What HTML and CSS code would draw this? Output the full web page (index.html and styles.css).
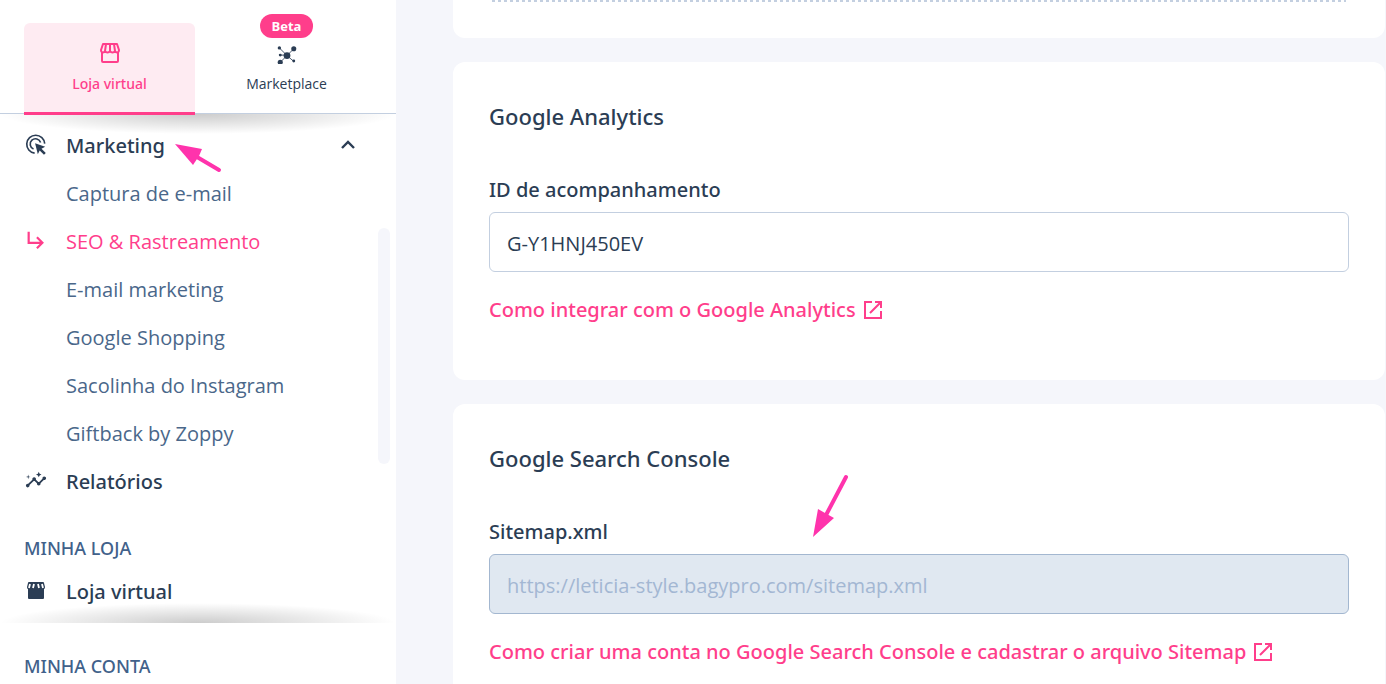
FILE: index.html
```html
<!DOCTYPE html>
<html lang="pt-BR">
<head>
    <meta charset="UTF-8">
    <meta name="viewport" content="width=device-width, initial-scale=1.0">
    <title>SEO &amp; Rastreamento</title>
    <link rel="stylesheet" href="styles.css">
</head>
<body>
    <aside class="sidebar">
        <div class="tabs">
            <button type="button" class="tab active">
                <svg class="tab-icon" viewBox="0 0 22 22" fill="none" stroke="currentColor" stroke-width="2" stroke-linejoin="round">
                    <path d="M3 10v9q0 1 1 1h14q1 0 1-1v-9"/>
                    <path d="M4 2h14l2 6c0 3-3 3-4 1c-1 2-4 2-5 0c-1 2-4 2-5 0c-1 2-4 2-4-1zM7 2L6 9M11 2v7M15 2l1 7"/>
                </svg>
                <span>Loja virtual</span>
            </button>
            <button type="button" class="tab">
                <span class="badge">Beta</span>
                <svg class="tab-icon" viewBox="-1 -4 26 26" fill="currentColor" stroke="currentColor">
                    <path d="M3 3l9 9M20 4L4 20M12 12l8 7M4 11.500h8" fill="none" stroke-width="1"/>
                    <g stroke="none">
                        <circle cx="12" cy="12" r="4"/>
                        <circle cx="20" cy="4" r="3"/>
                        <circle cx="4" cy="20" r="3"/>
                        <circle cx="3" cy="3" r="2"/>
                        <circle cx="20" cy="18.500" r="1.700"/>
                        <circle cx="4" cy="11.500" r="1.700"/>
                    </g>
                </svg>
                <span>Marketplace</span>
            </button>
        </div>
        <nav class="menu">
            <button type="button" class="menu-item" aria-expanded="true">
                <svg class="icon" viewBox="0 0 24 24" fill="none" stroke="currentColor" stroke-width="1.800">
                    <path d="M10.500 20.900A9.800 9.800 0 1 1 21.500 10.500M9.300 16.400A5.800 5.800 0 1 1 17 9.300"/>
                    <path d="M11 10l11 4-4 2 4.700 4.600-2 2L16 18l-2 4z" fill="currentColor" stroke="none"/>
                </svg>
                <span>Marketing</span>
                <svg class="chevron" viewBox="0 0 16 16" fill="none" stroke="currentColor" stroke-width="2.400">
                    <path d="M2 11l6-6 6 6"/>
                </svg>
            </button>
            <a href="#" class="menu-item sub">Captura de e-mail</a>
            <a href="#" class="menu-item sub current">
                <svg class="icon" viewBox="0 0 24 24" fill="none" stroke="currentColor" stroke-width="2.400">
                    <path d="M4 2v12h15M13 8l6 6-6 6"/>
                </svg>
                <span>SEO &amp; Rastreamento</span>
            </a>
            <a href="#" class="menu-item sub">E-mail marketing</a>
            <a href="#" class="menu-item sub">Google Shopping</a>
            <a href="#" class="menu-item sub">Sacolinha do Instagram</a>
            <a href="#" class="menu-item sub">Giftback by Zoppy</a>
            <a href="#" class="menu-item">
                <svg class="icon" viewBox="0 1 24 24" fill="currentColor">
                    <path d="M21 8c-1.450 0-2.260 1.440-1.930 2.510l-3.550 3.560c-.3-.09-.74-.09-1.040 0l-2.550-2.550C12.270 10.450 11.460 9 10 9c-1.450 0-2.270 1.440-1.930 2.520l-4.560 4.550C2.440 15.740 1 16.550 1 18c0 1.100.9 2 2 2 1.450 0 2.260-1.440 1.930-2.510l4.550-4.560c.3.09.74.09 1.040 0l2.550 2.550C12.730 16.550 13.540 18 15 18c1.450 0 2.270-1.440 1.930-2.520l3.560-3.550C21.560 12.260 23 11.450 23 10c0-1.100-.9-2-2-2z"/>
                    <path d="M15 9l.94-2.070L18 6l-2.060-.93L15 3l-.92 2.070L12 6l2.080.93zM3.500 11L4 9l2-.5L4 8l-.5-2L3 8l-2 .5L3 9z"/>
                </svg>
                <span>Relatórios</span>
            </a>
            <h2 class="menu-title">MINHA LOJA</h2>
            <a href="#" class="menu-item">
                <svg class="icon" viewBox="0 1 22 22" fill="currentColor">
                    <path d="M4 3h14q1 0 1 1l1 4q0 2-1 2v9q0 1-1 1H4q-1 0-1-1v-9q-1 0-1-2l1-4q0-1 1-1z"/>
                    <path d="M5 5L4 9M9 5L8 9M13 5l1 4M17 5l1 4" fill="none" stroke="#fff" stroke-width="1.800"/>
                </svg>
                <span>Loja virtual</span>
            </a>
            <span class="scroll-thumb"></span>
        </nav>
        <h2 class="menu-title account">MINHA CONTA</h2>
    </aside>

    <main class="content">
        <section class="card upload">
            <div class="dropzone"></div>
        </section>
        <section class="card">
            <h2>Google Analytics</h2>
            <label for="tracking">ID de acompanhamento</label>
            <input type="text" id="tracking" value="G-Y1HNJ450EV">
            <a href="#" class="help">
                Como integrar com o Google Analytics
                <svg class="external" viewBox="0 0 18 18" fill="none" stroke="currentColor" stroke-width="2">
                    <path d="M8 1H1v16h16v-7M11 1h6v6M17 1L6 12"/>
                </svg>
            </a>
        </section>
        <section class="card">
            <h2>Google Search Console</h2>
            <label for="sitemap">Sitemap.xml</label>
            <input type="text" id="sitemap" value="https://leticia-style.bagypro.com/sitemap.xml" disabled>
            <a href="#" class="help">
                Como criar uma conta no Google Search Console e cadastrar o arquivo Sitemap
                <svg class="external" viewBox="0 0 18 18" fill="none" stroke="currentColor" stroke-width="2">
                    <path d="M8 1H1v16h16v-7M11 1h6v6M17 1L6 12"/>
                </svg>
            </a>
        </section>
    </main>

    <svg class="arrow arrow-menu" viewBox="0 0 48 30">
        <path d="M22 13l22 13" fill="none" stroke="#ff33ac" stroke-width="4" stroke-linecap="round"/>
        <path d="M0 0l27 5-3 7-6 9z" fill="#ff33ac"/>
    </svg>
    <svg class="arrow arrow-sitemap" viewBox="0 0 38 64">
        <path d="M33 3L12 43" fill="none" stroke="#ff33ac" stroke-width="4" stroke-linecap="round"/>
        <path d="M0 63l5-28 7 4 9 5z" fill="#ff33ac"/>
    </svg>
</body>
</html>
```
FILE: styles.css
```css
* {
    box-sizing: border-box;
}

body {
    margin: 0;
    height: 100vh;
    overflow: hidden;
    display: flex;
    background: #f5f6fb;
    color: #2b3d54;
    font-family: "Open Sans", "Noto Sans", sans-serif;
    font-size: 20px;
}

h2 {
    margin: 0;
}

a {
    text-decoration: none;
}

button {
    border: none;
    background: none;
    color: inherit;
    font-family: inherit;
    cursor: pointer;
}

h2,
label,
.menu-item,
.help {
    font-family: "Noto Sans", "Open Sans", sans-serif;
    font-weight: 500;
}

/* sidebar */
.sidebar {
    flex: 0 0 396px;
    display: flex;
    flex-direction: column;
    background: #fff;
}

.tabs {
    display: flex;
    gap: 6px;
    padding: 23px 24px 0;
    border-bottom: 1px solid #c3cfe0;
}

.tab {
    flex: 1;
    position: relative;
    display: flex;
    flex-direction: column;
    align-items: center;
    gap: 8px;
    height: 92px;
    margin-bottom: -2px;
    padding: 19px 0 0;
    border-bottom: 3px solid transparent;
    border-radius: 6px 6px 0 0;
    font-size: 14px;
    line-height: 24px;
}

.tab.active {
    background: #feebf2;
    border-bottom-color: #ff3e8b;
    color: #ff3e8b;
    font-family: "Noto Sans", "Open Sans", sans-serif;
    font-weight: 500;
    z-index: 2;
}

.tab-icon {
    width: 22px;
    height: 22px;
}

.badge {
    position: absolute;
    top: -9px;
    left: 50%;
    transform: translateX(-50%);
    padding: 0 12px;
    border-radius: 12px;
    background: #ff3e8b;
    color: #fff;
    font-size: 13px;
    font-weight: 700;
}

.menu {
    position: relative;
    padding: 7px 0 8px;
}

/* scroll shadows */
.menu::before,
.menu::after {
    content: "";
    position: absolute;
    left: 0;
    right: 0;
    height: 20px;
    pointer-events: none;
}

.menu::before {
    top: 0;
    background: radial-gradient(farthest-side at 50% 0, rgba(0, 0, 0, 0.2), rgba(0, 0, 0, 0));
}

.menu::after {
    bottom: 0;
    background: radial-gradient(farthest-side at 50% 100%, rgba(0, 0, 0, 0.2), rgba(0, 0, 0, 0));
}

.menu-item {
    display: flex;
    align-items: center;
    gap: 19px;
    width: 100%;
    height: 48px;
    padding: 0 40px 0 25px;
    color: #2b3d54;
    font-size: 20px;
}

.menu-item.sub {
    padding-left: 66px;
    color: #4a678a;
    font-family: "Open Sans", "Noto Sans", sans-serif;
    font-weight: 400;
}

.menu-item.current {
    padding-left: 25px;
    color: #ff3e8b;
}

.icon {
    width: 22px;
    height: 22px;
}

.chevron {
    width: 16px;
    height: 16px;
    margin-left: auto;
}

.menu-title {
    padding: 28px 24px 4px;
    color: #41618a;
    font-size: 18px;
    line-height: 30px;
}

.menu-title.account {
    padding-bottom: 0;
}

.scroll-thumb {
    position: absolute;
    top: 114px;
    right: 6px;
    width: 12px;
    height: 236px;
    border-radius: 6px;
    background: #f5f6fb;
}

/* content */
.content {
    flex: 1;
    display: flex;
    flex-direction: column;
    gap: 24px;
    padding: 0 1px 0 57px;
}

.card {
    flex: none;
    display: flex;
    flex-direction: column;
    align-items: flex-start;
    padding: 36px;
    border-radius: 12px;
    background: #fff;
}

.card.upload {
    padding-top: 0;
    border-radius: 0 0 12px 12px;
}

.dropzone {
    width: 100%;
    height: 2px;
    padding: 0 3px;
    background: repeating-linear-gradient(90deg, #c3cfe0 0 3px, transparent 3px 6px) content-box;
}

.card h2 {
    margin-bottom: 40px;
    font-size: 22px;
    line-height: 36px;
}

.card label {
    margin-bottom: 6px;
    line-height: 32px;
}

.card h2 + label {
    margin-top: 0;
}

.card input {
    width: 100%;
    height: 60px;
    padding: 2px 17px 0;
    border: 1px solid #c3cfe0;
    border-radius: 6px;
    background: #fff;
    color: #2b3d54;
    font-family: inherit;
    font-size: 20px;
}

.card input:disabled {
    border-color: #a3b7d0;
    background: #e0e8f1;
    color: #a3b7d3;
}

.help {
    display: flex;
    align-items: center;
    gap: 8px;
    margin: 22px 0 18px;
    color: #ff3e8b;
    line-height: 32px;
    white-space: nowrap;
}

.external {
    width: 18px;
    height: 18px;
}

/* callout arrows over the page */
.arrow {
    position: absolute;
    pointer-events: none;
}

.arrow-menu {
    top: 144px;
    left: 175px;
    width: 48px;
    height: 30px;
}

.arrow-sitemap {
    top: 474px;
    left: 813px;
    width: 38px;
    height: 64px;
}
```
